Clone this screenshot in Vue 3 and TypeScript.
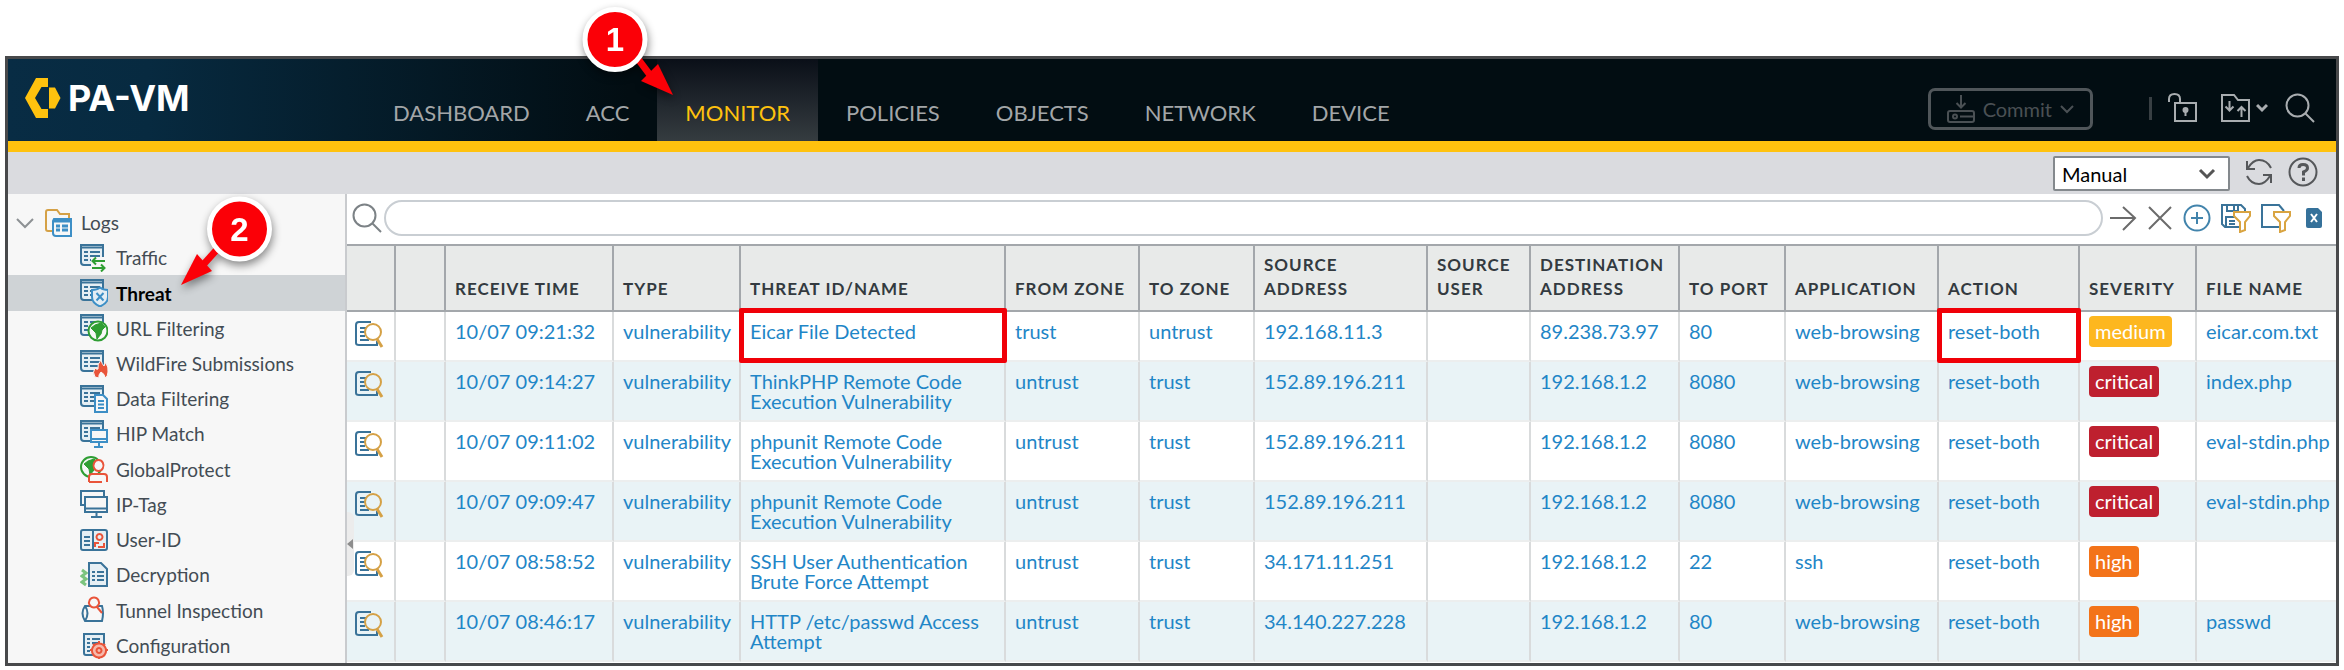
<script setup lang="ts">
interface Shape {
  d: string
  s?: string
  f?: string
  w?: number
}
interface LogItem {
  label: string
  icon: Shape[]
}
interface Column {
  key: keyof Row | 'blank'
  label: string
  cls: string
}
interface Row {
  time: string
  type: string
  name: string
  from: string
  to: string
  src: string
  srcUser: string
  dst: string
  port: string
  app: string
  action: string
  severity: 'medium' | 'critical' | 'high'
  file: string
}

const navy = '#3a7399'
const blue = '#3d8fc6'
const green = '#2f9e33'
const red = '#e9543a'
const paper = '#f7f7f7'

const sheet: Shape[] = [
  { d: 'M1 1H23V21H4Q1 21 1 18Z', s: navy, f: '#e6eff4', w: 2 },
  { d: 'M1 3.5H23', s: navy, w: 2 },
  { d: 'M4 8H8M10 8H20M4 12H8M10 12H20M4 16H8M10 16H20', s: navy, w: 2 },
]
const globe = (x: number, y: number, r: number): Shape[] => [
  { d: `M${x - r} ${y}a${r} ${r} 0 1 0 ${2 * r} 0a${r} ${r} 0 1 0 ${-2 * r} 0`, s: green, f: paper, w: 2 },
  { d: `M${x - 7} ${y - 3}l4 -3l6 -2l4 4l-3 3l-1 4l-4 5l-1 -6z`, f: green, s: green, w: 1 },
]

const logItems: LogItem[] = [
  {
    label: 'Traffic',
    icon: [
      ...sheet,
      { d: 'M11 13H28V28H11Z', f: paper },
      { d: 'M25 17H13M16 13.5L12.500 17L16 20.5M12 24H24M21 20.500L24.500 24L21 27.500', s: green, w: 2 },
    ],
  },
  {
    label: 'Threat',
    icon: [
      ...sheet,
      { d: 'M12 11Q17 11 20 8.500Q23 11 28 11V18Q28 24 20 27.500Q12 24 12 18Z', s: blue, f: '#e3edf4', w: 2 },
      { d: 'M16.500 14L23.500 21.500M23.500 14L16.500 21.500', s: blue, w: 2 },
    ],
  },
  { label: 'URL Filtering', icon: [...sheet, ...globe(18, 17, 9.5)] },
  {
    label: 'WildFire Submissions',
    icon: [
      ...sheet,
      {
        d: 'M15 27Q12 22 15 18Q17 20 18 19Q17 14 21 10Q22 14 24 16Q25 14 25 12Q29 17 28 22Q28 26 25 28Q25 24 21 22Q18 25 19 28Z',
        s: paper,
        f: red,
        w: 1,
      },
    ],
  },
  {
    label: 'Data Filtering',
    icon: [
      ...sheet,
      { d: 'M15 10H23L27 14V27H15Z', s: blue, f: paper, w: 2 },
      { d: 'M18 16H24M18 19.500H24M18 23H24', s: blue, w: 2 },
    ],
  },
  {
    label: 'HIP Match',
    icon: [
      ...sheet,
      { d: 'M11 10H27V22H11Z', s: blue, f: paper, w: 2 },
      { d: 'M11 19H27M19 22V27M14 27H23', s: blue, w: 2 },
    ],
  },
  {
    label: 'GlobalProtect',
    icon: [
      ...globe(11, 12, 10),
      { d: 'M9 28V22Q9 19 12 19H24Q27 19 27 22V28Z', f: paper },
      { d: 'M18.500 5a5 5.500 0 1 0 .01 0M9 27V22Q9 19 12 19H24Q27 19 27 22V27M9 27H22', s: red, f: paper, w: 2 },
    ],
  },
  {
    label: 'IP-Tag',
    icon: [
      { d: 'M1 1H24V15H1Z', s: navy, f: paper, w: 2 },
      { d: 'M5 7H27V22H5Z', s: navy, f: paper, w: 2 },
      { d: 'M5 18.500H27M16.500 22V27M11 27H22', s: navy, w: 2 },
    ],
  },
  {
    label: 'User-ID',
    icon: [
      { d: 'M3 4H25Q27 4 27 6V22Q27 24 25 24H3Q1 24 1 22V6Q1 4 3 4ZM13 4V24', s: navy, f: '#e6eff4', w: 2 },
      { d: 'M4 11H10M4 15H10M4 19H10', s: navy, w: 2 },
      { d: 'M19.500 8a3 3 0 1 0 .01 0M15 21V17H19M24 17V21H18', s: red, w: 2 },
    ],
  },
  {
    label: 'Decryption',
    icon: [
      { d: 'M2 9L6 12L2 15L6 18L2 21L6 24', s: '#7cc47e', w: 3 },
      { d: 'M9 2H21L27 8V25H9Z', s: navy, f: '#e6eff4', w: 2 },
      { d: 'M12 11H15M17 11H24M12 15H15M17 15H24M12 19H15M17 19H24', s: navy, w: 2 },
    ],
  },
  {
    label: 'Tunnel Inspection',
    icon: [
      { d: 'M5 10H22Q24 17 22 25H5Q0 17 5 10ZM5 10Q10 17 5 25', s: navy, f: paper, w: 2 },
      { d: 'M14 1.500a5 5 0 1 0 .01 0M17 11L22 17', s: red, f: paper, w: 2 },
    ],
  },
  {
    label: 'Configuration',
    icon: [
      { d: 'M4 3H24V24H6Q4 24 4 22Z', s: navy, f: '#e6eff4', w: 2 },
      { d: 'M7 8H10M12 8H20M7 12H10M12 12H20M7 16H10M7 20H10', s: navy, w: 2 },
      { d: 'M19 12.500a7 7 0 1 0 .01 0M19 10V12M19 26V28M10 19H12M26 19H28M13 13L14 14M25 13L24 14M13 25L14 24M25 25L24 24', s: red, f: '#f6b9ac', w: 2 },
      { d: 'M19 17a2.500 2.500 0 1 0 .01 0', s: red, w: 2 },
    ],
  },
]

const tabs = ['DASHBOARD', 'ACC', 'MONITOR', 'POLICIES', 'OBJECTS', 'NETWORK', 'DEVICE']
const activeTab = 'MONITOR'
const activeLog = 'Threat'

const columns: Column[] = [
  { key: 'blank', label: '', cls: 'c-flag' },
  { key: 'time', label: 'RECEIVE TIME', cls: 'c-time' },
  { key: 'type', label: 'TYPE', cls: 'c-type' },
  { key: 'name', label: 'THREAT ID/NAME', cls: 'c-name' },
  { key: 'from', label: 'FROM ZONE', cls: 'c-from' },
  { key: 'to', label: 'TO ZONE', cls: 'c-to' },
  { key: 'src', label: 'SOURCE ADDRESS', cls: 'c-src' },
  { key: 'srcUser', label: 'SOURCE USER', cls: 'c-user' },
  { key: 'dst', label: 'DESTINATION ADDRESS', cls: 'c-dst' },
  { key: 'port', label: 'TO PORT', cls: 'c-port' },
  { key: 'app', label: 'APPLICATION', cls: 'c-app' },
  { key: 'action', label: 'ACTION', cls: 'c-action' },
  { key: 'severity', label: 'SEVERITY', cls: 'c-sev' },
  { key: 'file', label: 'FILE NAME', cls: 'c-file' },
]

const rows: Row[] = [
  { time: '10/07 09:21:32', type: 'vulnerability', name: 'Eicar File Detected', from: 'trust', to: 'untrust', src: '192.168.11.3', srcUser: '', dst: '89.238.73.97', port: '80', app: 'web-browsing', action: 'reset-both', severity: 'medium', file: 'eicar.com.txt' },
  { time: '10/07 09:14:27', type: 'vulnerability', name: 'ThinkPHP Remote Code Execution Vulnerability', from: 'untrust', to: 'trust', src: '152.89.196.211', srcUser: '', dst: '192.168.1.2', port: '8080', app: 'web-browsing', action: 'reset-both', severity: 'critical', file: 'index.php' },
  { time: '10/07 09:11:02', type: 'vulnerability', name: 'phpunit Remote Code Execution Vulnerability', from: 'untrust', to: 'trust', src: '152.89.196.211', srcUser: '', dst: '192.168.1.2', port: '8080', app: 'web-browsing', action: 'reset-both', severity: 'critical', file: 'eval-stdin.php' },
  { time: '10/07 09:09:47', type: 'vulnerability', name: 'phpunit Remote Code Execution Vulnerability', from: 'untrust', to: 'trust', src: '152.89.196.211', srcUser: '', dst: '192.168.1.2', port: '8080', app: 'web-browsing', action: 'reset-both', severity: 'critical', file: 'eval-stdin.php' },
  { time: '10/07 08:58:52', type: 'vulnerability', name: 'SSH User Authentication Brute Force Attempt', from: 'untrust', to: 'trust', src: '34.171.11.251', srcUser: '', dst: '192.168.1.2', port: '22', app: 'ssh', action: 'reset-both', severity: 'high', file: '' },
  { time: '10/07 08:46:17', type: 'vulnerability', name: 'HTTP /etc/passwd Access Attempt', from: 'untrust', to: 'trust', src: '34.140.227.228', srcUser: '', dst: '192.168.1.2', port: '80', app: 'web-browsing', action: 'reset-both', severity: 'high', file: 'passwd' },
]

const cellText = (row: Row, key: Column['key']): string => (key === 'blank' ? '' : row[key])
const isMarked = (index: number, key: Column['key']): boolean =>
  index === 0 && (key === 'name' || key === 'action')
</script>

<template>
  <div class="page">
    <div class="frame">
      <header class="top">
        <a class="brand" href="#">
          <svg width="36" height="40" viewBox="0 0 36 40" aria-hidden="true">
            <path d="M0 20L11 0H23V9H16.500L10 20L16.500 31H23V40H11Z" fill="#ffc20e" />
            <path d="M24 9.500H30L35.500 20L30 30.500H24Z" fill="#ffc20e" />
          </svg>
          <span>PA-VM</span>
        </a>
        <nav class="tabs">
          <a v-for="tab in tabs" :key="tab" href="#" class="tab" :class="{ active: tab === activeTab }">{{ tab }}</a>
        </nav>
        <div class="tools">
          <button class="commit" type="button">
            <svg width="28" height="30" viewBox="0 0 28 30" fill="none" stroke="currentColor" stroke-width="2" aria-hidden="true">
              <path d="M14 1V13M9.500 9L14 13.500L18.500 9M5 17H25Q27 17 27 19V26Q27 28 25 28H3Q1 28 1 26V19Q1 17 3 17H5M13 22.500H27" />
              <circle cx="8" cy="22.500" r="2" />
            </svg>
            <span>Commit</span>
            <svg width="14" height="10" viewBox="0 0 14 10" fill="none" stroke="currentColor" stroke-width="2" aria-hidden="true">
              <path d="M1 2L7 8L13 2" />
            </svg>
          </button>
          <span class="rule"></span>
          <button class="plain lock" type="button" aria-label="Config locks">
            <svg width="30" height="30" viewBox="0 0 30 30" fill="none" stroke="currentColor" stroke-width="2" aria-hidden="true">
              <path d="M7 10H28V28H7ZM1 9V6Q1 1 6.500 1Q12 1 12 6V10" />
              <circle cx="17.500" cy="17" r="2" fill="currentColor" />
              <path d="M17.500 18V23" />
            </svg>
          </button>
          <button class="plain folder" type="button" aria-label="Changes">
            <svg width="30" height="30" viewBox="0 0 30 30" fill="none" stroke="currentColor" stroke-width="2" aria-hidden="true">
              <path d="M1 2H13L17 7H28V28H1ZM8.500 8V17M4.500 13.500L8.500 17.500L12.500 13.500M20.500 24V14M16.500 18L20.500 14L24.500 18" />
            </svg>
            <svg width="12" height="30" viewBox="0 0 12 30" fill="none" stroke="currentColor" stroke-width="3" aria-hidden="true">
              <path d="M1 12L6 17L11 12" />
            </svg>
          </button>
          <button class="plain" type="button" aria-label="Search">
            <svg width="30" height="30" viewBox="0 0 30 30" fill="none" stroke="currentColor" stroke-width="2" aria-hidden="true">
              <circle cx="12.500" cy="12.500" r="11" />
              <path d="M20.500 20.500L29 29" />
            </svg>
          </button>
        </div>
      </header>

      <div class="toolbar">
        <select class="mode" aria-label="Refresh interval">
          <option>Manual</option>
        </select>
        <button class="plain" type="button" aria-label="Refresh">
          <svg width="28" height="28" viewBox="0 0 28 28" fill="none" stroke="currentColor" stroke-width="2" aria-hidden="true">
            <path d="M2 3V11H10M3 10Q8 2 14 2Q22 2 26 10M26 25V17H18M25 18Q20 26 14 26Q6 26 2 18" />
          </svg>
        </button>
        <button class="plain" type="button" aria-label="Help">
          <svg width="30" height="30" viewBox="0 0 30 30" fill="none" stroke="currentColor" stroke-width="2" aria-hidden="true">
            <circle cx="15" cy="15" r="13.500" />
            <path d="M11 11Q11 7.500 15 7.500Q19.500 7.500 19.500 11Q19.500 13.500 15.500 15V18.500" stroke-width="3" />
            <path d="M15.500 20.500V24" stroke-width="3" />
          </svg>
        </button>
      </div>

      <div class="body">
        <nav class="side">
          <a class="log root" href="#">
            <svg width="18" height="12" viewBox="0 0 18 12" fill="none" stroke="#8d9194" stroke-width="2" aria-hidden="true">
              <path d="M1 2L9 10L17 2" />
            </svg>
            <svg class="folder-icon" width="28" height="28" viewBox="0 0 28 28" fill="none" stroke-width="2" aria-hidden="true">
              <path d="M8 22H3Q1 22 1 20V3Q1 1 3 1H12L15 5H24V10" stroke="#d5a146" />
              <path d="M9 10H26V27H11Q8 27 8 24V12Z" :stroke="blue" :fill="paper" />
              <path d="M9 12H26M11 17H15M17 17H23M11 21H15M17 21H23" :stroke="blue" stroke-width="3" />
            </svg>
            <span>Logs</span>
          </a>
          <a v-for="item in logItems" :key="item.label" class="log" :class="{ current: item.label === activeLog }" href="#">
            <svg width="28" height="28" viewBox="0 0 28 28" aria-hidden="true">
              <path
                v-for="(p, i) in item.icon"
                :key="i"
                :d="p.d"
                :stroke="p.s ?? 'none'"
                :fill="p.f ?? 'none'"
                :stroke-width="p.w ?? 0"
              />
            </svg>
            <span>{{ item.label }}</span>
          </a>
        </nav>

        <main class="main">
          <button class="handle" type="button" aria-label="Collapse sidebar">
            <svg width="6" height="10" viewBox="0 0 6 10" aria-hidden="true"><path d="M6 0V10L0 5Z" fill="#8d8d8d" /></svg>
          </button>
          <form class="filter" @submit.prevent>
            <svg width="30" height="30" viewBox="0 0 30 30" fill="none" stroke="#7c8286" stroke-width="2" aria-hidden="true">
              <circle cx="12.500" cy="12.500" r="11" />
              <path d="M20.500 20.500L29 29" />
            </svg>
            <input type="text" aria-label="Filter" />
            <button class="plain" type="submit" aria-label="Apply filter">
              <svg width="28" height="28" viewBox="0 0 28 28" fill="none" stroke="#6b6b6b" stroke-width="2" aria-hidden="true">
                <path d="M1 14H26M14 3L26 14L14 26" />
              </svg>
            </button>
            <button class="plain" type="button" aria-label="Clear filter">
              <svg width="26" height="28" viewBox="0 0 26 28" fill="none" stroke="#6b6b6b" stroke-width="2" aria-hidden="true">
                <path d="M2 3L24 25M24 3L2 25" />
              </svg>
            </button>
            <button class="plain" type="button" aria-label="Add filter">
              <svg width="28" height="28" viewBox="0 0 28 28" fill="none" stroke="#4284ac" stroke-width="2" aria-hidden="true">
                <circle cx="14" cy="14" r="12.500" />
                <path d="M14 8V20M8 14H20" />
              </svg>
            </button>
            <button class="plain" type="button" aria-label="Save filter">
              <svg width="30" height="30" viewBox="0 0 30 30" fill="none" stroke-width="2" aria-hidden="true">
                <path d="M22 24H4L1 21V2H20L24 6V9M6 2V8H17V2M13 3V7M5 24V14H14M8 18H14M8 21H14" :stroke="navy" />
                <path d="M13 9H29V13L24 19V27L19 29V19L13 13Z" stroke="#d9a441" fill="#fff" />
              </svg>
            </button>
            <button class="plain" type="button" aria-label="Load filter">
              <svg width="30" height="30" viewBox="0 0 30 30" fill="none" stroke-width="2" aria-hidden="true">
                <path d="M20 24H1V2H18L23 8" :stroke="navy" />
                <path d="M13 9H29V13L24 19V27L19 29V19L13 13Z" stroke="#d9a441" fill="#fff" />
              </svg>
            </button>
            <button class="plain export" type="button" aria-label="Export to CSV">
              <svg width="18" height="22" viewBox="0 0 18 22" aria-hidden="true">
                <path d="M3 1H13L17 5V19Q17 21 15 21H3Q1 21 1 19V3Q1 1 3 1Z" fill="#35719a" />
                <path d="M6 7L12 15M12 7L6 15" stroke="#fff" stroke-width="2" />
              </svg>
            </button>
          </form>

          <table class="grid">
            <thead>
              <tr>
                <th class="c-icon"></th>
                <th v-for="c in columns" :key="c.key" :class="c.cls">{{ c.label }}</th>
              </tr>
            </thead>
            <tbody>
              <tr v-for="(row, r) in rows" :key="row.time">
                <td class="detail">
                  <button class="plain" type="button" aria-label="Log details">
                    <svg width="30" height="28" viewBox="0 0 30 28" fill="none" stroke-width="2" aria-hidden="true">
                      <path d="M22 20V24H4Q1 24 1 22V4Q1 1 4 1H16" :stroke="navy" />
                      <path d="M5 7H11M5 11H10M5 15H10M5 19H14" :stroke="navy" />
                      <circle cx="18" cy="11" r="8" stroke="#d5a146" />
                      <path d="M22 18L27 26" stroke="#d5a146" stroke-width="3" />
                    </svg>
                  </button>
                </td>
                <td v-for="c in columns" :key="c.key" :class="{ marked: isMarked(r, c.key) }">
                  <span v-if="c.key === 'severity'" class="badge" :class="row.severity">{{ row.severity }}</span>
                  <a v-else-if="cellText(row, c.key)" href="#">{{ cellText(row, c.key) }}</a>
                </td>
              </tr>
            </tbody>
          </table>
        </main>
      </div>
    </div>

    <svg class="callout first" width="100" height="110" viewBox="0 0 100 110">
      <path class="shaft" d="M50 50L68 74" />
      <path class="head" d="M88 90L56 76L73 59Z" />
      <circle cx="30" cy="34.500" r="30" />
      <text x="30" y="46">1</text>
    </svg>
    <svg class="callout second" width="110" height="110" viewBox="0 0 110 110">
      <path class="shaft" d="M46 50L28 70" />
      <path class="head" d="M6 90L22 59L37 76Z" />
      <circle cx="64.500" cy="34" r="30" />
      <text x="64.500" y="46">2</text>
    </svg>
  </div>
</template>

<style>
body {
  margin: 0;
  background: #fff;
}
</style>

<style scoped>
.page {
  position: relative;
  box-sizing: border-box;
  min-height: 100vh;
  padding: 56px 5px 4px;
  font-family: Lato, "Liberation Sans", sans-serif;
  font-size: 20px;
  color: #434c54;
}
.page * {
  box-sizing: border-box;
}
a {
  color: inherit;
  text-decoration: none;
}
svg {
  display: block;
  flex: none;
}
.frame {
  display: flex;
  flex-direction: column;
  border: 3px solid #48494b;
}
.plain {
  display: flex;
  padding: 0;
  border: 0;
  background: none;
  color: inherit;
}

.top {
  display: flex;
  align-items: stretch;
  height: 93px;
  border-bottom: 11px solid #ffc20e;
  background: linear-gradient(90deg, #082c44 0, #072a40 140px, #020d12 620px);
}
.brand {
  display: flex;
  align-items: center;
  gap: 7px;
  width: 357px;
  padding: 0 0 4px 17px;
  color: #fff;
  font-family: Inter, "Liberation Sans", sans-serif;
  font-size: 36px;
  font-weight: 700;
}
.tabs {
  display: flex;
}
.tab {
  display: flex;
  padding: 40px 28px 0;
  color: #a3a6a8;
  font-size: 22px;
  line-height: 28px;
}
.tab.active {
  color: #ffc20e;
  background: linear-gradient(180deg, #0a0f18, #353c40);
}
.tools {
  display: flex;
  align-items: center;
  margin-left: auto;
  padding: 17px 21px 0 0;
  color: #a9adb0;
}
.tools > .plain {
  margin-top: -2px;
}
.commit {
  display: flex;
  align-items: center;
  gap: 8px;
  height: 42px;
  padding: 0 16px;
  border: 3px solid #50565a;
  border-radius: 7px;
  background: none;
  color: #4a5054;
  font: inherit;
}
.rule {
  width: 3px;
  height: 23px;
  margin: 0 16px 0 56px;
  background: #383f43;
}
.folder {
  gap: 5px;
  margin: 0 17px 0 23px;
}

.toolbar {
  display: flex;
  align-items: flex-start;
  justify-content: flex-end;
  gap: 15px;
  height: 42px;
  padding: 4px 18px 0 0;
  background: #dadbdf;
  color: #55575a;
}
.toolbar .plain {
  align-items: center;
  height: 32px;
}
.mode {
  width: 177px;
  height: 35px;
  padding: 0 7px;
  border: 2px solid #84898d;
  border-radius: 2px;
  appearance: none;
  background: #fff
    url("data:image/svg+xml,%3Csvg xmlns='http://www.w3.org/2000/svg' width='18' height='12' fill='none' stroke='%23555' stroke-width='3'%3E%3Cpath d='M2 2l7 7 7-7'/%3E%3C/svg%3E")
    no-repeat right 12px center;
  color: #000;
  font: inherit;
}

.body {
  display: flex;
}
.side {
  display: grid;
  grid-template-rows: repeat(13, 1fr);
  flex: none;
  width: 339px;
  padding-top: 11px;
  border-right: 2px solid #c9cbce;
  background: #f7f7f7;
  font-size: 19px;
}
.log {
  display: flex;
  align-items: center;
  gap: 8px;
  padding-left: 72px;
}
.log.root {
  padding-left: 8px;
}
.folder-icon {
  margin-left: 3px;
}
.log.current {
  background: #cfd3d6;
  color: #000;
  font-weight: 700;
}

.main {
  position: relative;
  flex: 1;
  min-width: 0;
  padding-bottom: 1px;
  background: #fff;
}
.handle {
  position: absolute;
  z-index: 1;
  top: 318px;
  left: 0;
  display: flex;
  align-items: center;
  width: 7px;
  height: 64px;
  padding: 0;
  border: 0;
  border-radius: 0 6px 6px 0;
  background: #ececec;
}
.filter {
  display: flex;
  align-items: center;
  height: 50px;
  padding: 0 13px 2px 5px;
  gap: 10px;
}
.filter input {
  flex: 1;
  min-width: 0;
  height: 36px;
  margin: 0 -4px 0 -8px;
  padding: 0 16px;
  border: 2px solid #c9ced3;
  border-radius: 18px;
  background: #fff;
  font: inherit;
}
.filter .export {
  margin: 0 0 0 4px;
}

.grid {
  width: 100%;
  table-layout: fixed;
  border-collapse: separate;
  border-spacing: 0;
}
th {
  height: 68px;
  padding: 0 0 9px 9px;
  border: solid #a3a7ab;
  border-width: 2px 2px 2px 0;
  background: #e8eae9;
  color: #333a40;
  font-size: 17px;
  font-weight: 700;
  line-height: 24px;
  letter-spacing: 1px;
  text-align: left;
  vertical-align: bottom;
}
td {
  position: relative;
  height: 60px;
  padding: 9px 0 9px 9px;
  border-right: 2px solid #d9dbdc;
  border-bottom: 2px solid #eceeee;
  color: #1f86c7;
  line-height: 20px;
  vertical-align: top;
}
tbody tr:first-child td {
  height: 50px;
}
tbody tr:nth-child(even) td {
  background: #e9f3f6;
}
th:last-child,
td:last-child {
  border-right: 0;
}
.c-icon {
  width: 49px;
}
.c-flag {
  width: 50px;
}
.c-time {
  width: 168px;
}
.c-type {
  width: 127px;
}
.c-from {
  width: 134px;
}
.c-to {
  width: 115px;
}
.c-src {
  width: 173px;
}
.c-user {
  width: 103px;
}
.c-dst {
  width: 149px;
}
.c-port {
  width: 106px;
}
.c-app {
  width: 153px;
}
.c-action {
  width: 141px;
}
.c-sev {
  width: 117px;
}
.c-file {
  width: 139px;
}
td.detail {
  padding-left: 8px;
}
.badge {
  display: inline-block;
  margin-top: -6px;
  padding: 0 6px;
  border-radius: 4px;
  color: #fff;
  line-height: 31px;
}
.badge.medium {
  background: #fdb71f;
}
.badge.critical {
  background: #be202f;
}
.badge.high {
  background: #f37319;
}
.marked::after {
  content: "";
  position: absolute;
  inset: -4px -3px -3px -2px;
  z-index: 2;
  border: 5px solid #f00008;
  border-radius: 2px;
}

.callout {
  position: absolute;
  z-index: 3;
  overflow: visible;
  filter: drop-shadow(1px 4px 4px rgb(0 0 0 / 45%));
}
.callout.first {
  top: 5px;
  left: 585px;
}
.callout.second {
  top: 195px;
  left: 175px;
}
.callout circle {
  fill: #fb0007;
  stroke: #fff;
  stroke-width: 5px;
}
.callout .shaft {
  stroke: #fb0007;
  stroke-width: 7px;
}
.callout .head {
  fill: #fb0007;
}
.callout text {
  fill: #fff;
  font-family: "Liberation Sans", sans-serif;
  font-size: 33px;
  font-weight: 700;
  text-anchor: middle;
}
</style>
